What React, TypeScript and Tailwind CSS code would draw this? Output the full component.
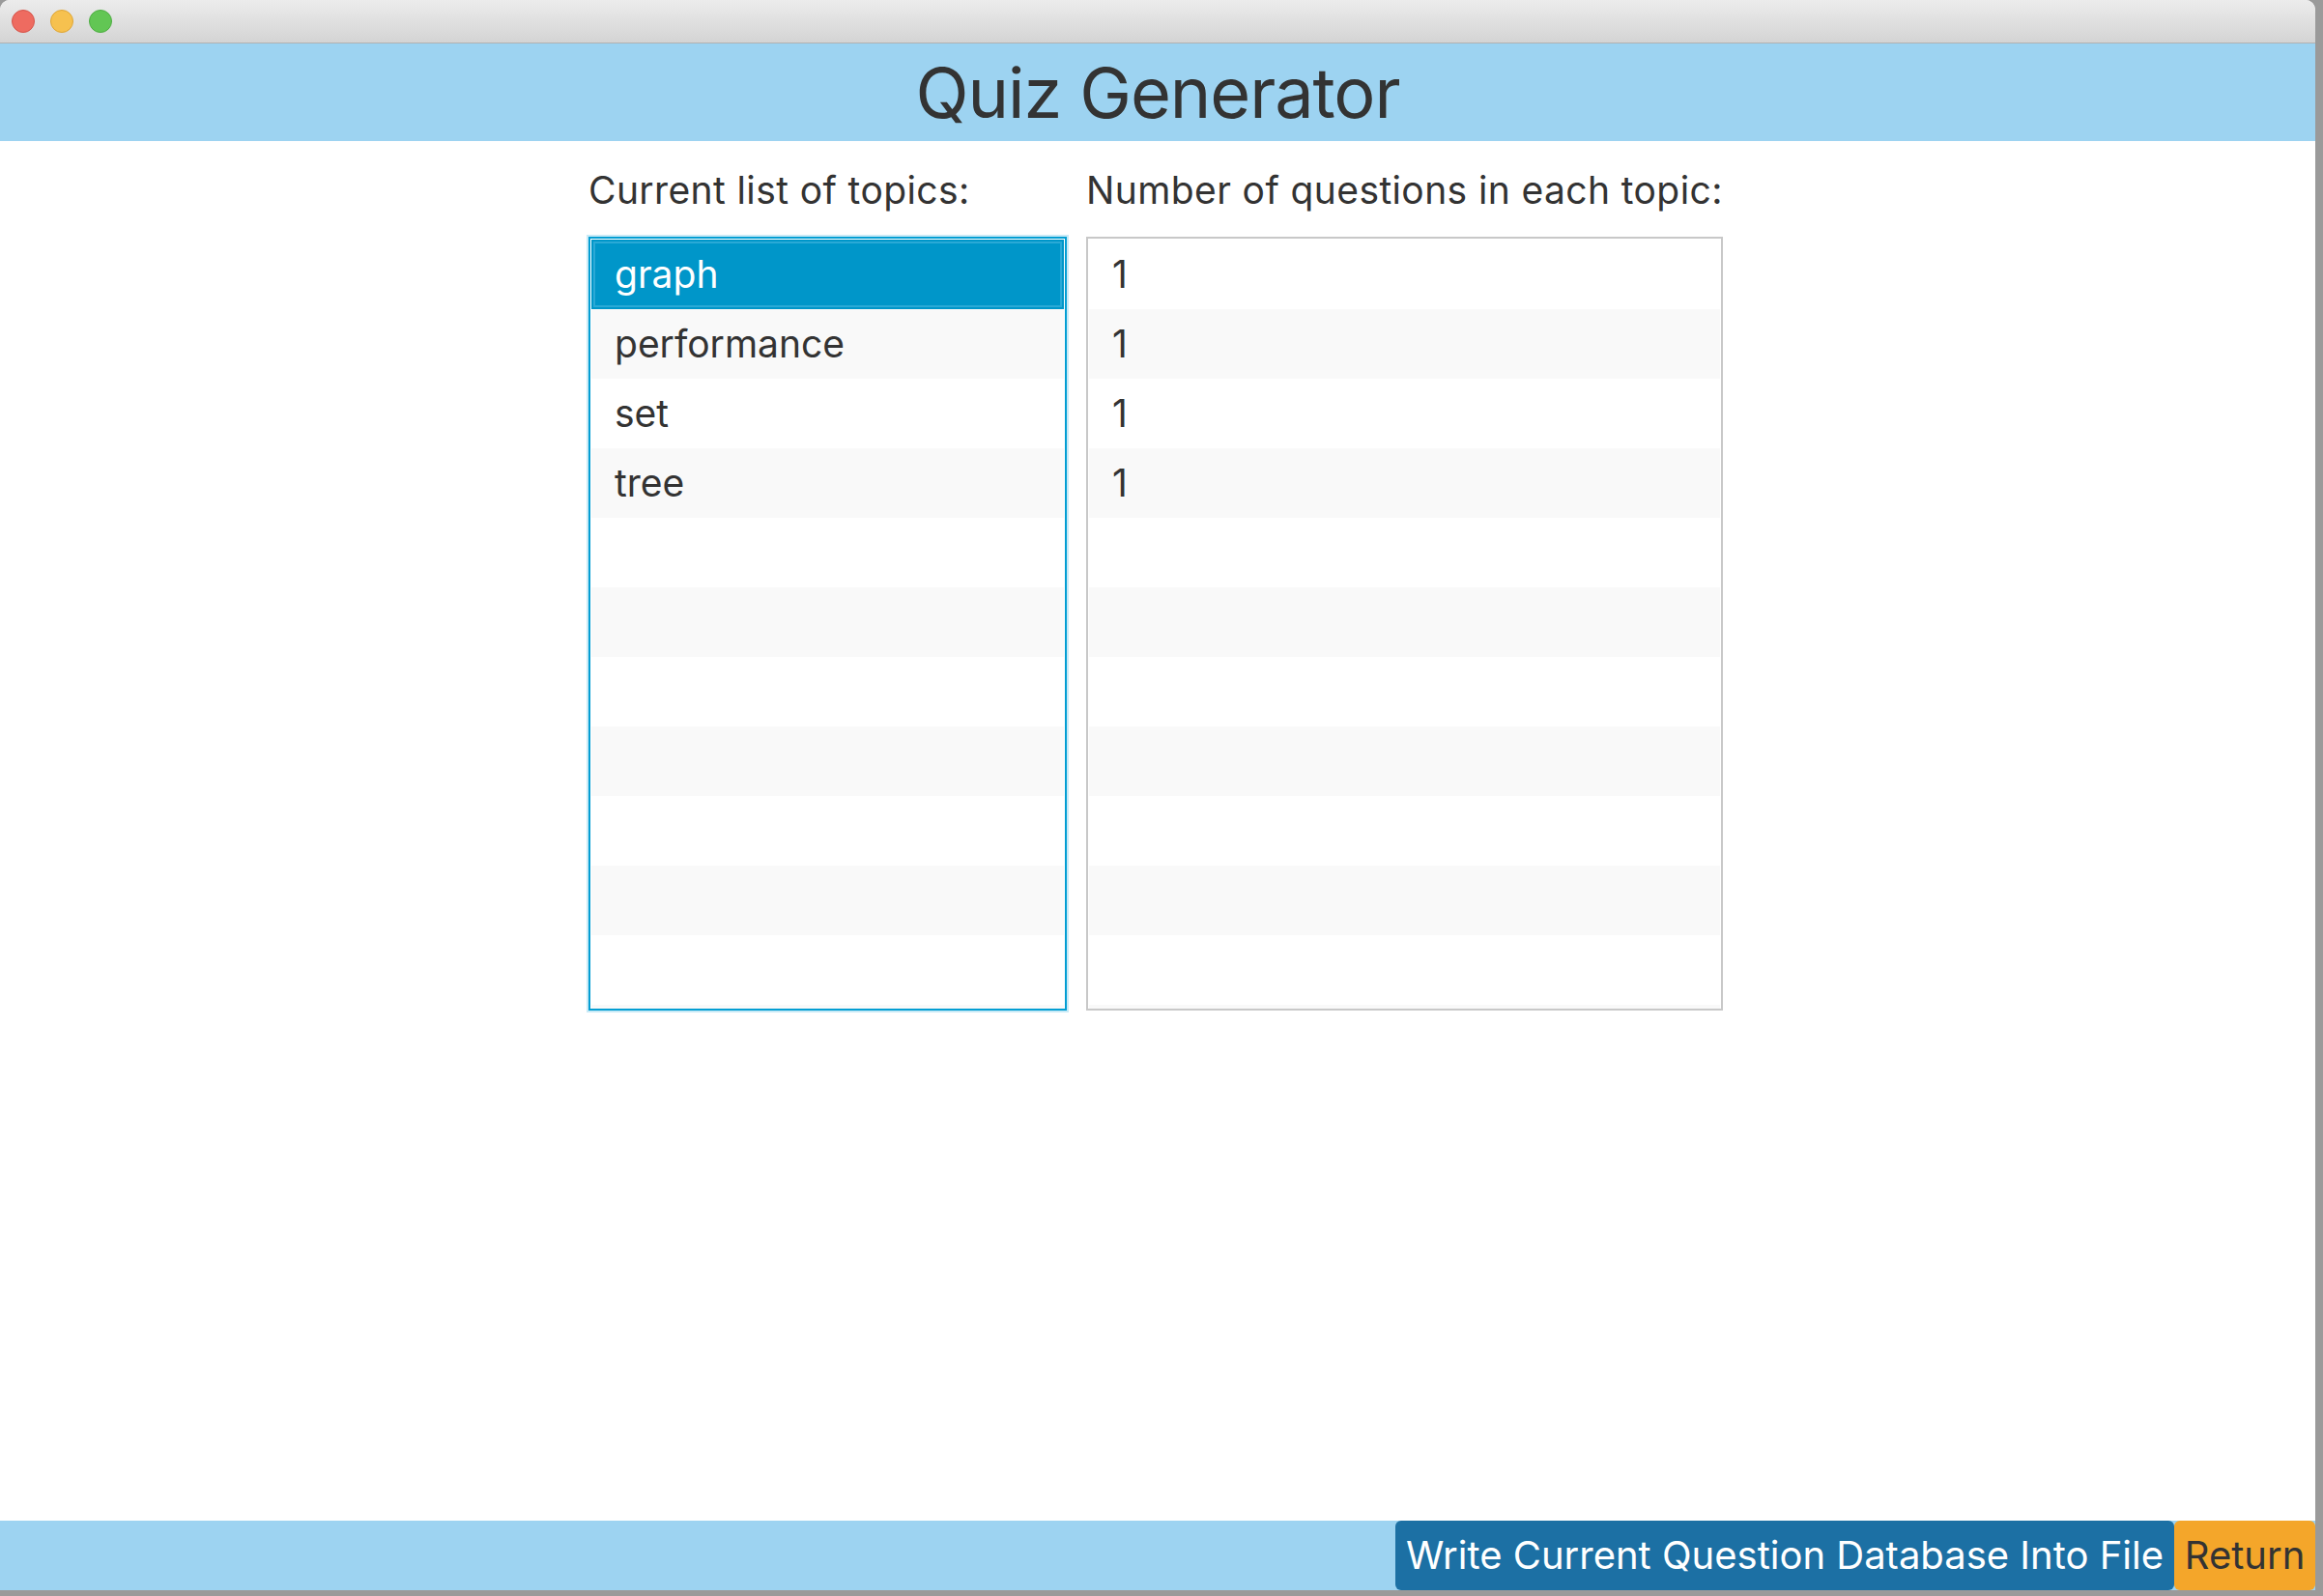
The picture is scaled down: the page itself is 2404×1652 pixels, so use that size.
import React from "react";

const topics = ["graph", "performance", "set", "tree"];
const counts = ["1", "1", "1", "1"];
const ROWS = 12;

function Row({ text, idx, selected }: { text?: string; idx: number; selected?: boolean }) {
  if (selected) {
    return (
      <div className="h-[72px] shrink-0 flex items-center pl-[24px] bg-[#0096c9] text-white shadow-[inset_0_0_0_2px_#0096c9,inset_0_0_0_4px_#2aa9d6]">
        {text}
      </div>
    );
  }
  return (
    <div className={`h-[72px] shrink-0 flex items-center pl-[24px] text-[#333] ${idx % 2 === 1 ? "bg-[#f9f9f9]" : "bg-white"}`}>
      {text}
    </div>
  );
}

export default function App() {
  return (
    <div className="w-[2404px] h-[1652px] bg-[#9a9a9a] flex font-['Inter',sans-serif] overflow-hidden">
      <div className="w-[2396px] h-[1646px] flex flex-col bg-white rounded-t-[10px] overflow-hidden">
        {/* title bar */}
        <div className="h-[45px] shrink-0 bg-gradient-to-b from-[#ececec] to-[#d4d4d4] border-b border-[#b1b1b1] flex items-center gap-[16px] pl-[12px]">
          <div className="w-[24px] h-[24px] rounded-full bg-[#ee6b60] border border-[#d5544a]" />
          <div className="w-[24px] h-[24px] rounded-full bg-[#f6c14f] border border-[#dea535]" />
          <div className="w-[24px] h-[24px] rounded-full bg-[#62c654] border border-[#4ead43]" />
        </div>

        {/* header */}
        <div className="h-[101px] shrink-0 bg-[#9dd3f1] flex items-center justify-center">
          <h1 className="text-[72px] leading-none tracking-[-0.015em] text-[#333]">Quiz Generator</h1>
        </div>

        {/* content */}
        <div className="flex-1 flex justify-center gap-[20px] pt-[28px] pr-[4px]">
          <div className="w-[495px] flex flex-col">
            <div className="text-[39px] leading-[46px] tracking-[0.01em] text-[#333] h-[71px]">Current list of topics:</div>
            <div className="h-[801px] border-2 border-[#039ed3] shadow-[0_0_0_2px_#c9eaf6] p-[1px] flex flex-col overflow-hidden text-[39px]">
              {Array.from({ length: ROWS }).map((_, i) => (
                <Row key={i} idx={i} text={topics[i]} selected={i === 0} />
              ))}
            </div>
          </div>
          <div className="w-[659px] flex flex-col">
            <div className="text-[39px] leading-[46px] tracking-[0.01em] text-[#333] h-[71px]">Number of questions in each topic:</div>
            <div className="h-[801px] border-2 border-[#c8c8c8] p-[1px] flex flex-col overflow-hidden text-[39px]">
              {Array.from({ length: ROWS }).map((_, i) => (
                <Row key={i} idx={i} text={counts[i]} />
              ))}
            </div>
          </div>
        </div>

        {/* bottom bar */}
        <div className="h-[72px] shrink-0 bg-[#9dd3f1] flex justify-end">
          <button className="w-[806px] h-full bg-[#1c70a4] text-white text-[40px] rounded-[6px] flex items-center justify-center">
            Write Current Question Database Into File
          </button>
          <button className="w-[146px] h-full bg-[#f4a62a] text-[#333] text-[40px] rounded-[6px] flex items-center justify-center">
            Return
          </button>
        </div>
      </div>
    </div>
  );
}
